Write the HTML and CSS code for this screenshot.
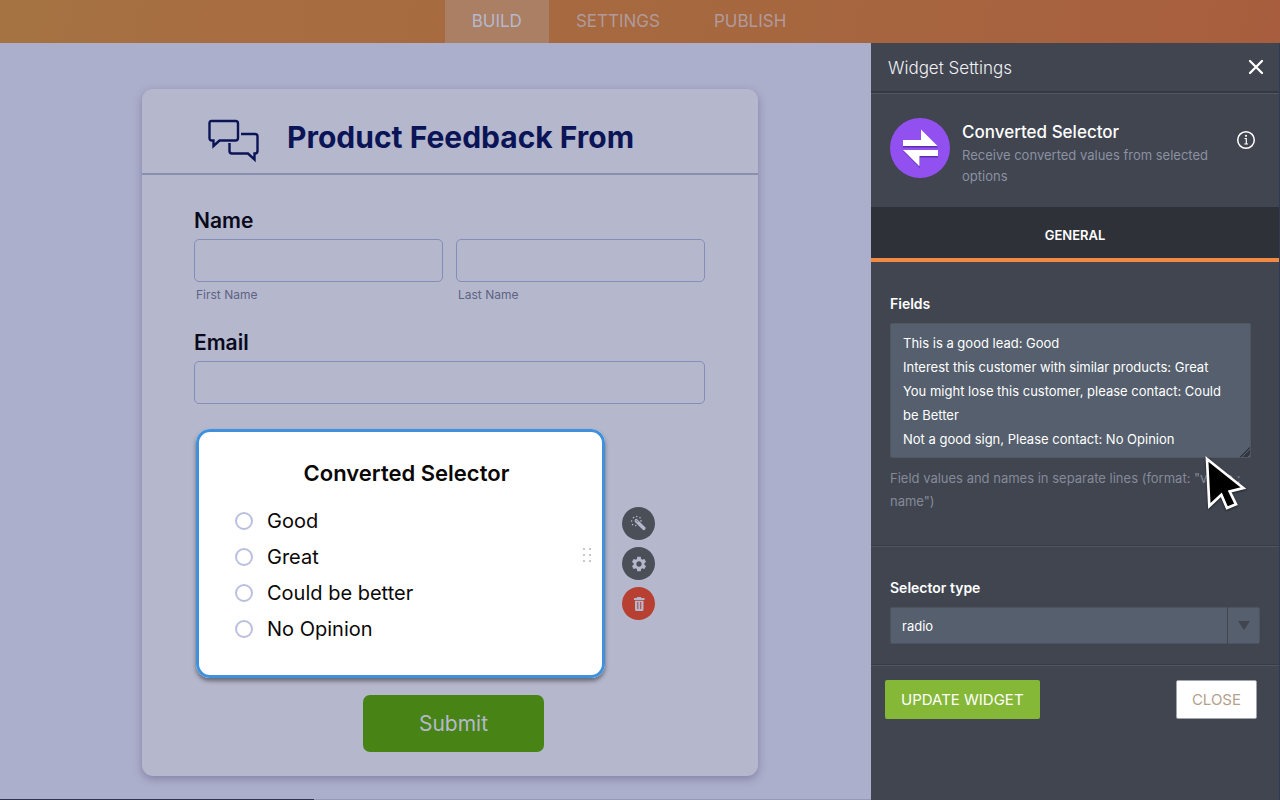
FILE: index.html
```html
<!DOCTYPE html>
<html lang="en">
<head>
<meta charset="utf-8">
<meta name="viewport" content="width=device-width, initial-scale=1">
<title>Form Builder</title>
<link rel="stylesheet" href="styles.css">
</head>
<body>
<header class="topbar">
  <nav class="tabs">
    <a class="tab tab-active" href="#build">BUILD</a>
    <a class="tab" href="#settings">SETTINGS</a>
    <a class="tab" href="#publish">PUBLISH</a>
  </nav>
</header>
<div class="workspace">
  <main class="canvas">
    <form class="form-card">
      <div class="form-header">
        <svg class="chat-icon" viewBox="0 0 52 44" width="52" height="44" fill="none" stroke="currentColor" stroke-width="2.4" aria-hidden="true">
          <path d="M3.500 2H27.500Q30 2 30 4.500V19Q30 21.500 27.500 21.500H11.500L5.500 27V21.500H4Q1.500 21.500 1.500 19V4.500Q1.500 2 3.500 2Z"/>
          <path d="M33 15H47Q49.500 15 49.500 17.500V32Q49.500 34.500 47 34.500H46.500V40.500L40 34.500H24Q21.500 34.500 21.500 32V24"/>
        </svg>
        <h1 class="form-title">Product Feedback From</h1>
      </div>
      <div class="form-body">
        <fieldset class="field-group">
          <legend class="field-label">Name</legend>
          <div class="name-row">
            <div class="name-cell">
              <input class="text-input" id="first" type="text">
              <label class="sub-label" for="first">First Name</label>
            </div>
            <div class="name-cell">
              <input class="text-input" id="last" type="text">
              <label class="sub-label" for="last">Last Name</label>
            </div>
          </div>
        </fieldset>
        <div class="field-group email-group">
          <label class="field-label" for="email">Email</label>
          <input class="text-input" id="email" type="email">
        </div>
        <div class="widget-row">
          <fieldset class="widget" aria-labelledby="widget-title">
            <h2 class="widget-title" id="widget-title">Converted Selector</h2>
            <div class="widget-content">
              <div class="options">
                <label class="option"><input class="radio" type="radio" name="opinion">Good</label>
                <label class="option"><input class="radio" type="radio" name="opinion">Great</label>
                <label class="option"><input class="radio" type="radio" name="opinion">Could be better</label>
                <label class="option"><input class="radio" type="radio" name="opinion">No Opinion</label>
              </div>
              <svg class="grip" viewBox="0 0 10 16" width="10" height="16" fill="currentColor" aria-hidden="true">
                <circle cx="2" cy="2" r="1.100"/><circle cx="8" cy="2" r="1.100"/>
                <circle cx="2" cy="8" r="1.100"/><circle cx="8" cy="8" r="1.100"/>
                <circle cx="2" cy="14" r="1.100"/><circle cx="8" cy="14" r="1.100"/>
              </svg>
            </div>
          </fieldset>
          <div class="actions">
            <button class="action" type="button" aria-label="Widget wizard">
              <svg viewBox="0 0 18 18" width="18" height="18" fill="currentColor" aria-hidden="true">
                <path d="M5.200 4.300Q6.300 3.400 7.400 4.400L15.200 12.200Q16 13.400 15.200 14.500Q14 15.700 12.800 14.800L5 7Q4 5.600 5.200 4.300Z"/>
                <path d="M6 5.200L8 7.200" stroke="#4a4f58" stroke-width=".8"/>
                <circle cx="6.800" cy="1.500" r=".8"/><circle cx="3.500" cy="2.600" r=".8"/><circle cx="10" cy="2.800" r=".8"/><circle cx="1.600" cy="6" r=".8"/><circle cx="11" cy="5.900" r=".8"/><circle cx="2.600" cy="9.600" r=".8"/><circle cx="5.800" cy="10.500" r=".8"/>
              </svg>
            </button>
            <button class="action" type="button" aria-label="Widget settings">
              <svg viewBox="0 0 24 24" width="18" height="18" fill="currentColor" aria-hidden="true">
                <path d="M19.140 12.940c.04-.3.060-.61.060-.94 0-.32-.02-.64-.07-.94l2.030-1.580c.18-.14.230-.41.120-.61l-1.920-3.320c-.12-.22-.37-.29-.59-.22l-2.390.960c-.5-.38-1.030-.7-1.620-.94L14.400 2.810c-.04-.24-.24-.41-.48-.41h-3.840c-.24 0-.43.170-.47.410L9.250 5.350c-.59.240-1.130.570-1.620.940l-2.390-.96c-.22-.08-.47 0-.59.220L2.740 8.870c-.12.210-.08.470.120.610l2.030 1.580c-.05.300-.09.630-.09.940s.02.640.070.940l-2.030 1.580c-.18.140-.23.410-.12.610l1.920 3.320c.12.220.370.290.590.220l2.390-.96c.5.380 1.030.700 1.620.940l.36 2.540c.05.240.240.410.480.410h3.840c.24 0 .44-.17.470-.41l.36-2.540c.59-.24 1.130-.56 1.620-.94l2.390.960c.22.080.470 0 .59-.22l1.920-3.320c.12-.22.070-.47-.12-.61l-2.010-1.580zM12 15.600c-1.980 0-3.600-1.620-3.600-3.600s1.620-3.600 3.600-3.600 3.600 1.620 3.600 3.600-1.620 3.600-3.600 3.600z"/>
              </svg>
            </button>
            <button class="action action-delete" type="button" aria-label="Delete widget">
              <svg viewBox="0 0 16 16" width="16" height="16" fill="currentColor" fill-rule="evenodd" aria-hidden="true">
                <path d="M6 1H10V2H13.500V4H3V2H6ZM4 4.700H12.500V13.500Q12.500 15 11 15H5.500Q4 15 4 13.500ZM6.300 6V13H7.300V6ZM9.200 6V13H10.200V6Z"/>
              </svg>
            </button>
          </div>
        </div>
        <button class="submit" type="submit">Submit</button>
      </div>
    </form>
    <div class="progress"><div class="progress-fill"></div></div>
  </main>
  <aside class="panel">
    <div class="panel-head">
      <h2 class="panel-title">Widget Settings</h2>
      <button class="icon-button" type="button" aria-label="Close panel">
        <svg viewBox="0 0 16 16" width="16" height="16" stroke="currentColor" stroke-width="2.300" stroke-linecap="round" aria-hidden="true"><path d="M2 2L14 14M14 2L2 14"/></svg>
      </button>
    </div>
    <div class="panel-info">
      <svg class="widget-logo" viewBox="0 0 60 60" width="60" height="60" aria-hidden="true">
        <circle cx="30" cy="30" r="30" fill="#9250f0"/>
        <path d="M13 23H31V13L48 29.500H13ZM13 33H48V39.500H30V50Z" fill="#5c2daf"/>
        <path d="M13 22H31V11.500L47.500 28H13ZM13 32H48V38H29.500V48.500Z" fill="#fff"/>
      </svg>
      <div class="info-text">
        <h3 class="info-title">Converted Selector</h3>
        <p class="info-desc">Receive converted values from selected options</p>
      </div>
      <button class="icon-button info-button" type="button" aria-label="About this widget">
        <svg viewBox="0 0 20 20" width="20" height="20" fill="none" stroke="currentColor" aria-hidden="true">
          <circle cx="10" cy="10" r="8.300" stroke-width="1.500"/>
          <path d="M8.500 8.500H10.300V14M8.300 14H12" stroke-width="1.200"/>
          <circle cx="10" cy="5.800" r="1.100" fill="currentColor" stroke="none"/>
        </svg>
      </button>
    </div>
    <button class="panel-tab" type="button">GENERAL</button>
    <section class="panel-section fields-section">
      <label class="panel-label" for="fields">Fields</label>
      <textarea class="panel-textarea" id="fields" rows="5">This is a good lead: Good
Interest this customer with similar products: Great
You might lose this customer, please contact: Could be Better
Not a good sign, Please contact: No Opinion</textarea>
      <div class="hint-wrap">
        <p class="hint">Field values and names in separate lines (format: "value : name")</p>
        <svg class="cursor" viewBox="0 0 132 174" width="44" height="58" aria-hidden="true">
          <path d="M9 12L118 99L77 109L96 148L69 159L52 119L16 153Z" fill="#000" stroke="#fff" stroke-width="8"/>
        </svg>
      </div>
    </section>
    <section class="panel-section type-section">
      <label class="panel-label" for="type">Selector type</label>
      <div class="select-wrap">
        <select class="panel-select" id="type"><option>radio</option><option>dropdown</option></select>
        <span class="select-arrow"></span>
      </div>
    </section>
    <div class="panel-foot">
      <button class="btn btn-update" type="button">UPDATE WIDGET</button>
      <button class="btn btn-close" type="button">CLOSE</button>
    </div>
  </aside>
</div>
</body>
</html>
```

FILE: styles.css
```css
* { box-sizing: border-box; }
body {
  margin: 0;
  min-height: 100vh;
  display: flex;
  flex-direction: column;
  font-family: Inter, "Liberation Sans", sans-serif;
  background: #acafcb;
}
h1, h2, h3, p, fieldset { margin: 0; }
fieldset { padding: 0; border: 0; min-width: 0; }
button, input, textarea, select { font-family: inherit; }
svg { display: block; flex: none; }

.topbar {
  height: 43px;
  background: linear-gradient(100deg, #a57342, #a86d41 20%, #a6673f 60%, #a85e3e);
}
.tabs {
  height: 100%;
  display: flex;
  justify-content: center;
  padding-right: 22px;
}
.tab {
  display: flex;
  align-items: center;
  padding: 0 27px 2px;
  font-size: 17px;
  font-weight: 400;
  color: #b09a9c;
  text-decoration: none;
}
.tab-active { background: #ab7f64; color: #b5b8cc; }

.workspace { flex: 1; display: flex; }
.canvas { flex: 1; min-width: 0; display: flex; flex-direction: column; }
.form-card {
  margin: 46px 113px 21px 142px;
  padding-bottom: 24px;
  border-radius: 11px;
  background: #b5b8cc;
  box-shadow: 0 3px 8px rgba(70, 60, 110, .4);
}
.form-header {
  display: flex;
  align-items: center;
  gap: 27px;
  height: 86px;
  padding: 14px 66px 0;
  border-bottom: 2px solid #8b8fae;
  color: #0b1456;
}
.chat-icon { margin-top: 6px; }
.form-title { font-size: 30px; line-height: 36px; font-weight: 700; padding-bottom: 2px; }
.form-body { display: flex; flex-direction: column; padding: 32px 53px 0 52px; }
.field-label {
  display: block;
  padding: 0;
  margin-bottom: 4px;
  font-size: 21px;
  line-height: 28px;
  font-weight: 600;
  color: #0a0a1c;
}
.name-row { display: grid; grid-template-columns: 1fr 1fr; gap: 13px; }
.text-input {
  display: block;
  width: 100%;
  height: 43px;
  padding: 0 12px;
  border: 1px solid #858cba;
  border-radius: 5px;
  background: transparent;
  font-size: 16px;
}
.sub-label { display: block; margin: 4px 2px 0; font-size: 12px; line-height: 18px; color: #5d6385; }
.email-group { margin-top: 25px; }
.widget-row { display: flex; align-items: center; gap: 17px; margin-top: 25px; padding-left: 2px; }
.widget {
  flex: 0 1 409px;
  padding: 27px 10px 28px 36px;
  border: 3px solid #3f91dd;
  border-radius: 14px;
  background: #fff;
  box-shadow: 0 3px 4px rgba(50, 50, 60, .6);
}
.widget-title { font-size: 22px; line-height: 28px; font-weight: 600; text-align: center; color: #0b0707; padding-right: 14px; }
.widget-content { display: flex; justify-content: space-between; align-items: flex-start; margin-top: 16px; }
.option { display: flex; align-items: center; gap: 14px; height: 36px; font-size: 20px; color: #0b0707; }
.radio {
  appearance: none;
  width: 18px;
  height: 18px;
  margin: 0;
  border: 2px solid #bcc0e0;
  border-radius: 50%;
  background: #fff;
}
.radio:checked { border-width: 5px; }
.grip { margin-top: 44px; color: #b9b9ca; }
.actions { display: flex; flex-direction: column; gap: 7px; padding-top: 20px; }
.action {
  display: flex;
  align-items: center;
  justify-content: center;
  width: 33px;
  height: 33px;
  padding: 0;
  border: 0;
  border-radius: 50%;
  background: #4a4f58;
  color: #b5b8cc;
}
.action-delete { background: #b84032; }
.submit {
  align-self: center;
  width: 181px;
  height: 57px;
  margin: 17px 0 0 8px;
  border: 0;
  border-radius: 7px;
  background: #488315;
  color: #b5b8cc;
  font-size: 21px;
}
.progress { margin-top: auto; background: #9698ba; }
.progress-fill { width: 36%; height: 1px; background: #303451; }

.panel {
  flex: 0 0 409px;
  display: flex;
  flex-direction: column;
  border-right: 1px solid #303a50;
  background: #404550;
  color: #fff;
}
.panel-head {
  display: flex;
  align-items: center;
  justify-content: space-between;
  height: 50px;
  padding: 0 15px 0 17px;
  border-bottom: 2px solid #353943;
}
.panel-title { padding-top: 2px; font-size: 17px; font-weight: 300; color: #f0f1f3; }
.icon-button { padding: 0; border: 0; background: none; color: #fff; }
.panel-info {
  display: flex;
  align-items: flex-start;
  gap: 12px;
  padding: 24px 23px 20px 19px;
  border-top: 1px solid #4f5561;
}
.info-text { flex: 1; padding-top: 2px; }
.info-title { font-size: 17px; line-height: 25px; font-weight: 500; }
.info-desc { font-size: 13px; line-height: 21px; color: #8b91a1; }
.info-button { margin-top: 12px; }
.panel-tab {
  height: 55px;
  padding: 4px 0 0;
  border: 0;
  border-bottom: 4px solid #f18a43;
  background: #2f3139;
  color: #fff;
  font-size: 13px;
  font-weight: 600;
}
.panel-section { padding: 0 19px; border-bottom: 1px solid #4f5561; box-shadow: inset 0 -1px #383c46; }
.fields-section { padding-top: 32px; padding-bottom: 33px; padding-right: 28px; }
.panel-label { display: block; font-size: 14px; line-height: 20px; font-weight: 600; }
.panel-textarea {
  display: block;
  width: 100%;
  height: 135px;
  margin-top: 9px;
  padding: 7px 12px;
  border: 1px solid #515760;
  border-radius: 2px;
  background: #555f6d;
  color: #fff;
  font-size: 13px;
  line-height: 24px;
  overflow: hidden;
  resize: vertical;
}
.panel-textarea::-webkit-resizer {
  background: linear-gradient(135deg, transparent 66%, #333842 66%, #333842 72%, transparent 72%, transparent 76%, #333842 76%, #333842 92%, transparent 92%);
}
.hint-wrap { position: relative; margin-top: 9px; }
.hint { font-size: 13px; line-height: 23px; color: #858a99; }
.cursor { position: absolute; top: -12px; right: 3px; filter: drop-shadow(0 1px 1px rgba(0, 0, 0, .5)); }
.type-section { padding-top: 31px; padding-bottom: 21px; }
.select-wrap { position: relative; margin-top: 9px; }
.panel-select {
  appearance: none;
  display: block;
  width: 100%;
  height: 37px;
  padding: 0 44px 0 11px;
  border: 1px solid #4c545f;
  border-radius: 2px;
  background: #555f6d;
  color: #fff;
  font-size: 13px;
}
.select-arrow {
  position: absolute;
  top: 0;
  right: 0;
  bottom: 0;
  width: 33px;
  display: flex;
  align-items: center;
  justify-content: center;
  border-left: 1px solid #404550;
  pointer-events: none;
}
.select-arrow::before { content: ""; border: 6px solid transparent; border-top: 9px solid #404550; border-bottom: 0; }
.panel-foot { display: flex; justify-content: space-between; padding: 14px 22px 14px 14px; }
.btn { height: 39px; padding: 0 15px; border: 1px solid transparent; border-radius: 2px; font-size: 15px; }
.btn-update { background: #86b838; color: #fff; }
.btn-close { border-color: #a0a4ac; background: #fff; color: #b3a18c; }
```
